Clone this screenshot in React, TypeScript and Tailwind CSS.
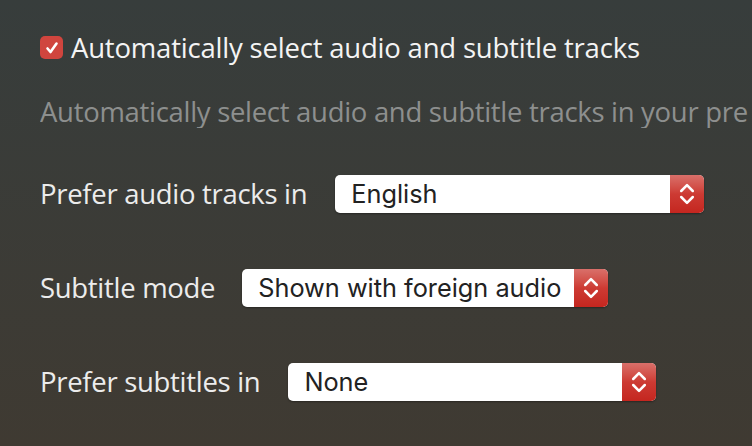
import React from "react";

function Stepper() {
  return (
    <div className="w-[34px] self-stretch rounded-r-[5px] bg-gradient-to-b from-[#d96f6a] via-[#cd3a33] to-[#c4261f] flex items-center justify-center">
      <svg width="16" height="26" viewBox="0 0 16 26" fill="none" stroke="white" strokeWidth="2.5" strokeLinecap="round" strokeLinejoin="round">
        <path d="M2.2 10 L8 4.2 L13.8 10" />
        <path d="M2.2 16 L8 21.8 L13.8 16" />
      </svg>
    </div>
  );
}

function Select({ value, width }: { value: string; width: string }) {
  return (
    <div className={`flex h-[38px] rounded-[5px] bg-white shadow-[0_1px_2px_rgba(0,0,0,0.35)] ${width}`}>
      <div className="flex-1 flex items-center pl-[16px] text-[25.3px] leading-[38px] text-[#222] font-['Inter','Noto_Sans',sans-serif]">
        {value}
      </div>
      <Stepper />
    </div>
  );
}

export default function App() {
  return (
    <div className="w-[752px] h-[446px] overflow-hidden bg-gradient-to-b from-[#373d3c] to-[#3f3a32] font-['Open_Sans',sans-serif]">
      <div className="pl-[40px] pt-[34px] flex flex-col">
        <div className="flex items-center gap-[8px] h-[27px]">
          <div className="w-[23px] h-[23px] rounded-[5px] bg-[#d0453e] flex items-center justify-center">
            <svg width="16" height="16" viewBox="0 0 16 16" fill="none" stroke="white" strokeWidth="2.6" strokeLinecap="round" strokeLinejoin="round">
              <path d="M3.5 8.5 L6.5 12 L12.5 3.5" />
            </svg>
          </div>
          <span className="text-[27.5px] leading-[27px] text-[#f4f4f4] whitespace-nowrap tracking-[-0.2px]">Automatically select audio and subtitle tracks</span>
        </div>
        <div className="mt-[34px] text-[27.5px] text-[#8d8f8e] whitespace-nowrap overflow-hidden tracking-[-0.3px] h-[33px] leading-[33px]">
          Automatically select audio and subtitle tracks in your pre
        </div>
        <div className="mt-[47px] flex items-center gap-[28px]">
          <span className="text-[27.5px] leading-[38px] text-[#ececec] whitespace-nowrap tracking-[-0.3px]">Prefer audio tracks in</span>
          <Select value="English" width="w-[369px]" />
        </div>
        <div className="mt-[56px] flex items-center gap-[27px]">
          <span className="text-[27.5px] leading-[38px] text-[#ececec] whitespace-nowrap tracking-[-0.3px]">Subtitle mode</span>
          <Select value="Shown with foreign audio" width="w-[366px]" />
        </div>
        <div className="mt-[56px] flex items-center gap-[28px]">
          <span className="text-[27.5px] leading-[38px] text-[#ececec] whitespace-nowrap tracking-[-0.3px]">Prefer subtitles in</span>
          <Select value="None" width="w-[368px]" />
        </div>
      </div>
    </div>
  );
}
